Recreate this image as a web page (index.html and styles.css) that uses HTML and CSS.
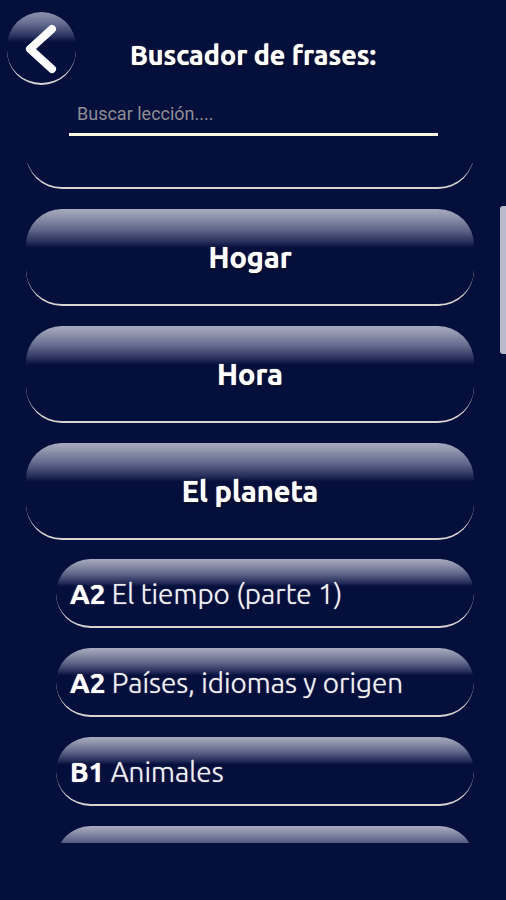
FILE: index.html
```html
<!DOCTYPE html>
<html lang="es">
<head>
<meta charset="utf-8">
<meta name="viewport" content="width=device-width, initial-scale=1">
<title>Buscador de frases</title>
<link rel="stylesheet" href="styles.css">
</head>
<body>
<header class="header">
  <button class="back glass" type="button" aria-label="Volver">
    <svg class="back-icon" viewBox="0 0 69 73" aria-hidden="true"><path d="M45 17 23 37 45 57"/></svg>
  </button>
  <h1 class="title">Buscador de frases:</h1>
</header>
<div class="search">
  <input class="search-input" type="search" aria-label="Buscar lección" placeholder="Buscar lección....">
</div>
<main class="viewport">
  <div class="scroller" id="lessons">
    <div class="list">
      <button class="topic glass" type="button" aria-label="Tema"></button>
      <button class="topic glass" type="button">Hogar</button>
      <button class="topic glass" type="button">Hora</button>
      <button class="topic glass" type="button">El planeta</button>
      <div class="lessons">
        <button class="lesson glass" type="button"><b>A2</b> El tiempo (parte 1)</button>
        <button class="lesson glass" type="button"><b>A2</b> Países, idiomas y origen</button>
        <button class="lesson glass" type="button"><b>B1</b> Animales</button>
        <button class="lesson glass" type="button" aria-label="Lección"></button>
      </div>
    </div>
  </div>
  <div class="thumb"></div>
</main>
<script src="script.js"></script>
</body>
</html>
```
FILE: styles.css
```css
* {
  box-sizing: border-box;
}

body {
  margin: 0;
  height: 100vh;
  display: flex;
  flex-direction: column;
  padding-bottom: 57px;
  background: #050f3c;
  color: #fff;
  font-family: Ubuntu, "Open Sans", "Noto Sans", sans-serif;
}

.glass {
  padding: 0;
  border: 0 solid #d8d4d0;
  border-bottom-width: 2px;
  border-radius: 36px;
  background: linear-gradient(#a8abbf 0, #9094ac 8%, #5d6488 22%, #262e5a 34%, #050f3c 40%) border-box;
  color: inherit;
  font-family: inherit;
  font-size: 28px;
  line-height: 36px;
  cursor: pointer;
}

.header {
  display: grid;
  grid-template-columns: 69px 1fr 69px;
  align-items: center;
  padding: 12px 7px 0;
}

.back {
  height: 73px;
  background: linear-gradient(#8c92ad 0, #686f93 15%, #262f5c 34%, #050f3c 41%) border-box;
}

.back-icon {
  display: block;
  width: 69px;
  height: 73px;
  fill: none;
  stroke: #fff;
  stroke-width: 8;
  stroke-linecap: round;
  stroke-linejoin: round;
}

.title {
  margin: 0;
  padding-top: 12px;
  font-size: 27px;
  line-height: 36px;
  font-weight: 700;
  text-align: center;
  white-space: nowrap;
  text-shadow: 0 0 1px #fff, 0 1px 2px #000;
}

.search {
  padding: 7px 68px 0 69px;
}

.search-input {
  display: block;
  width: 100%;
  height: 44px;
  padding: 2px 8px 0;
  border: 0;
  border-bottom: 3px solid #fdf8e2;
  border-radius: 0;
  outline: 0;
  appearance: none;
  background: transparent;
  color: #fff;
  font-family: Roboto, sans-serif;
  font-size: 18px;
}

.search-input::placeholder {
  color: #8d8d93;
  opacity: 1;
}

.viewport {
  position: relative;
  flex: 1;
  min-height: 0;
  margin-top: 27px;
}

.scroller {
  height: 100%;
  overflow-y: auto;
  scrollbar-width: none;
}

.list {
  display: flex;
  flex-direction: column;
  gap: 20px;
  padding: 0 32px 0 26px;
}

.topic {
  flex: none;
  height: 97px;
  font-size: 29px;
  font-weight: 700;
  text-shadow: 0 0 1px #fff, 0 1px 2px #000;
}

.lessons {
  display: flex;
  flex-direction: column;
  gap: 20px;
  margin-top: -1px;
  padding-left: 30px;
}

.lesson {
  flex: none;
  height: 69px;
  padding: 2px 0 0 14px;
  color: #f0f0f2;
  font-weight: 300;
  text-align: left;
  white-space: nowrap;
  text-shadow: 0 0 1px #c8c8d0;
}

.lesson b {
  color: #fff;
  font-weight: 700;
  text-shadow: 0 0 1px #fff;
}

.thumb {
  position: absolute;
  top: 43px;
  right: 0;
  width: 6px;
  height: 148px;
  border-radius: 3px 0 0 3px;
  background: #b9bacb;
}
```
FILE: script.js
```js
document.getElementById('lessons').scrollTop = 71;
```
